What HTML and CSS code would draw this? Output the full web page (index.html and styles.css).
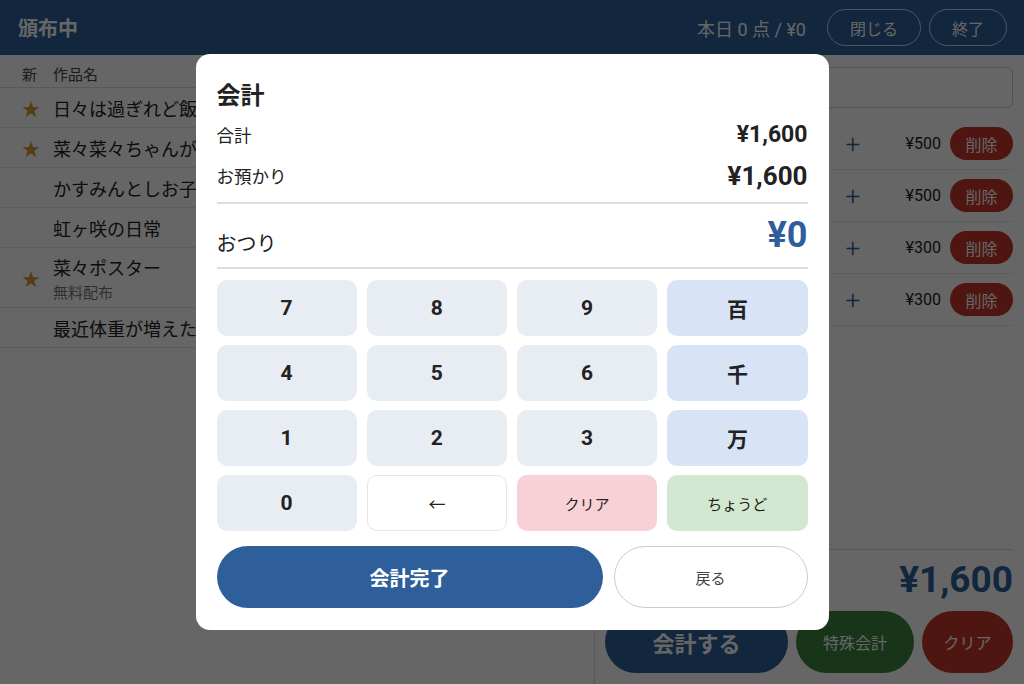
FILE: index.html
```html
<!DOCTYPE html>
<html lang="ja">
<head>
    <meta charset="UTF-8">
    <meta name="viewport" content="width=device-width, initial-scale=1.0">
    <title>頒布中</title>
    <link rel="stylesheet" href="styles.css">
</head>
<body>
    <header class="topbar">
        <h1>頒布中</h1>
        <div class="topbar-right">
            <span class="today">本日 0 点 / ¥0</span>
            <button class="outline-btn">閉じる</button>
            <button class="outline-btn">終了</button>
        </div>
    </header>

    <main class="layout">
        <section class="items">
            <div class="items-head">
                <span class="col-new">新</span>
                <span>作品名</span>
            </div>
            <div class="item"><span class="col-new star">★</span><span class="name">日々は過ぎれど飯うまし</span></div>
            <div class="item"><span class="col-new star">★</span><span class="name">菜々菜々ちゃんがいっぱい</span></div>
            <div class="item"><span class="col-new"></span><span class="name">かすみんとしお子ちゃん</span></div>
            <div class="item"><span class="col-new"></span><span class="name">虹ヶ咲の日常</span></div>
            <div class="item tall">
                <span class="col-new star">★</span>
                <span class="name">菜々ポスター<small>無料配布</small></span>
            </div>
            <div class="item"><span class="col-new"></span><span class="name">最近体重が増えた</span></div>
        </section>

        <section class="cart">
            <div class="search"></div>
            <div class="cart-row"><span class="cart-name">日々は過ぎれど飯うまし</span><span class="plus">+</span><span class="price">¥500</span><button class="del-btn">削除</button></div>
            <div class="cart-row"><span class="cart-name">菜々菜々ちゃんがいっぱい</span><span class="plus">+</span><span class="price">¥500</span><button class="del-btn">削除</button></div>
            <div class="cart-row"><span class="cart-name">かすみんとしお子ちゃん</span><span class="plus">+</span><span class="price">¥300</span><button class="del-btn">削除</button></div>
            <div class="cart-row"><span class="cart-name">虹ヶ咲の日常</span><span class="plus">+</span><span class="price">¥300</span><button class="del-btn">削除</button></div>

            <div class="cart-foot">
                <div class="cart-total">¥1,600</div>
                <div class="cart-actions">
                    <button class="pay-btn">会計する</button>
                    <button class="special-btn">特殊会計</button>
                    <button class="clear-btn">クリア</button>
                </div>
            </div>
        </section>
    </main>

    <div class="overlay">
        <div class="modal">
            <h2>会計</h2>
            <div class="sum-row">
                <span>合計</span>
                <span class="sum">¥1,600</span>
            </div>
            <div class="sum-row">
                <span>お預かり</span>
                <span class="received">¥1,600</span>
            </div>
            <div class="change-row">
                <span>おつり</span>
                <span class="change">¥0</span>
            </div>

            <div class="keypad">
                <button class="key">7</button>
                <button class="key">8</button>
                <button class="key">9</button>
                <button class="key unit">百</button>
                <button class="key">4</button>
                <button class="key">5</button>
                <button class="key">6</button>
                <button class="key unit">千</button>
                <button class="key">1</button>
                <button class="key">2</button>
                <button class="key">3</button>
                <button class="key unit">万</button>
                <button class="key">0</button>
                <button class="key back">←</button>
                <button class="key reset">クリア</button>
                <button class="key exact">ちょうど</button>
            </div>

            <div class="modal-actions">
                <button class="done-btn">会計完了</button>
                <button class="return-btn">戻る</button>
            </div>
        </div>
    </div>
</body>
</html>
```

FILE: styles.css
```css
* {
    box-sizing: border-box;
}
body {
    font-family: Roboto, "Noto Sans CJK JP", sans-serif;
    margin: 0;
    padding: 0;
    background-color: #fff;
    color: #222;
    height: 684px;
    overflow: hidden;
}
button {
    font-family: inherit;
    cursor: pointer;
}
.topbar {
    display: flex;
    align-items: center;
    justify-content: space-between;
    height: 55px;
    padding: 0 17px 0 18px;
    background-color: #2f5f9a;
    color: #fff;
}
.topbar h1 {
    font-size: 20px;
    margin: 0;
    font-weight: 700;
}
.topbar-right {
    display: flex;
    align-items: center;
    gap: 8px;
}
.today {
    font-size: 18px;
    margin-right: 13px;
}
.outline-btn {
    height: 37px;
    padding: 0 22px;
    border: 1px solid #c9d6e8;
    border-radius: 19px;
    background: transparent;
    color: #fff;
    font-size: 16px;
}

.layout {
    display: flex;
    height: 629px;
}
.items {
    width: 595px;
    border-right: 1px solid #ddd;
}
.items-head {
    display: flex;
    align-items: center;
    height: 33px;
    padding-top: 4px;
    font-size: 15px;
    color: #444;
    border-bottom: 1px solid #ddd;
}
.col-new {
    width: 53px;
    padding-left: 22px;
    flex-shrink: 0;
}
.star {
    color: #d49a30;
    font-size: 18px;
}
.item {
    display: flex;
    align-items: center;
    height: 40px;
    font-size: 18px;
    border-bottom: 1px solid #e6e6e6;
    white-space: nowrap;
}
.item.tall {
    height: 60px;
}
.item small {
    display: block;
    font-size: 15px;
    color: #777;
    margin-top: 1px;
}

.cart {
    flex: 1;
    display: flex;
    flex-direction: column;
    padding: 12px 11px 11px 0;
}
.search {
    height: 41px;
    margin-left: 10px;
    border: 1px solid #ccc;
    border-radius: 6px;
    margin-bottom: 10px;
}
.cart-row {
    display: flex;
    align-items: center;
    height: 52px;
    padding-left: 10px;
    border-bottom: 1px solid #e6e6e6;
    font-size: 16px;
}
.cart-name {
    flex: 1;
    white-space: nowrap;
    overflow: hidden;
}
.plus {
    color: #2f5f9a;
    font-size: 26px;
    font-weight: 300;
    width: 60px;
}
.price {
    font-size: 16px;
    margin-right: 9px;
}
.del-btn {
    width: 63px;
    height: 33px;
    border: none;
    border-radius: 17px;
    background-color: #c4362b;
    color: #fff;
    font-size: 16px;
}
.cart-foot {
    margin-top: auto;
    border-top: 1px solid #ddd;
}
.cart-total {
    text-align: right;
    font-size: 37px;
    font-weight: 700;
    color: #2f5f9a;
    padding: 8px 0 10px;
}
.cart-actions {
    display: grid;
    grid-template-columns: 183px 118px 91px;
    gap: 8px;
    padding-left: 10px;
}
.cart-actions button {
    height: 62px;
    border: none;
    border-radius: 31px;
    color: #fff;
}
.pay-btn {
    background-color: #2f5f9a;
    font-size: 22px;
    font-weight: 700;
}
.special-btn {
    background-color: #3d8443;
    font-size: 16px;
}
.clear-btn {
    background-color: #c4362b;
    font-size: 16px;
}

.overlay {
    position: fixed;
    inset: 0;
    background-color: rgba(0, 0, 0, 0.6);
    display: flex;
    align-items: center;
    justify-content: center;
}
.modal {
    width: 633px;
    background-color: #fff;
    border-radius: 14px;
    padding: 22px 21px 22px;
}
.modal h2 {
    font-size: 24px;
    margin: 0 0 3px;
    font-weight: 700;
}
.sum-row {
    display: flex;
    justify-content: space-between;
    align-items: center;
    font-size: 17.5px;
    height: 41px;
}
.sum {
    font-size: 23px;
    font-weight: 700;
}
.received {
    font-size: 26px;
    font-weight: 700;
}
.change-row {
    display: flex;
    justify-content: space-between;
    align-items: center;
    height: 67px;
    margin-top: 6px;
    padding-top: 13px;
    border-top: 2px solid #ddd;
    border-bottom: 2px solid #ddd;
    font-size: 20px;
}
.change {
    font-size: 36px;
    font-weight: 700;
    color: #2f5f9a;
    margin-top: -14px;
}
.keypad {
    display: grid;
    grid-template-columns: repeat(4, 1fr);
    grid-auto-rows: 56px;
    gap: 9px 10px;
    margin-top: 11px;
}
.key {
    border: none;
    border-radius: 10px;
    background-color: #e8edf3;
    color: #222;
    font-size: 21px;
    font-weight: 700;
}
.key.unit {
    background-color: #d8e4f5;
}
.key.back {
    background-color: #fff;
    border: 1px solid #e6e6e6;
    font-size: 17px;
    font-weight: 400;
}
.key.reset {
    background-color: #f8d1d7;
    font-size: 15px;
    font-weight: 400;
}
.key.exact {
    background-color: #d2e8d0;
    font-size: 15px;
    font-weight: 400;
}
.modal-actions {
    display: grid;
    grid-template-columns: 386px 1fr;
    gap: 11px;
    margin-top: 15px;
}
.done-btn {
    height: 62px;
    border: none;
    border-radius: 31px;
    background-color: #2f5f9a;
    color: #fff;
    font-size: 20px;
    font-weight: 700;
}
.return-btn {
    height: 62px;
    border: 1px solid #ccc;
    border-radius: 31px;
    background-color: #fff;
    color: #444;
    font-size: 15px;
}
```
